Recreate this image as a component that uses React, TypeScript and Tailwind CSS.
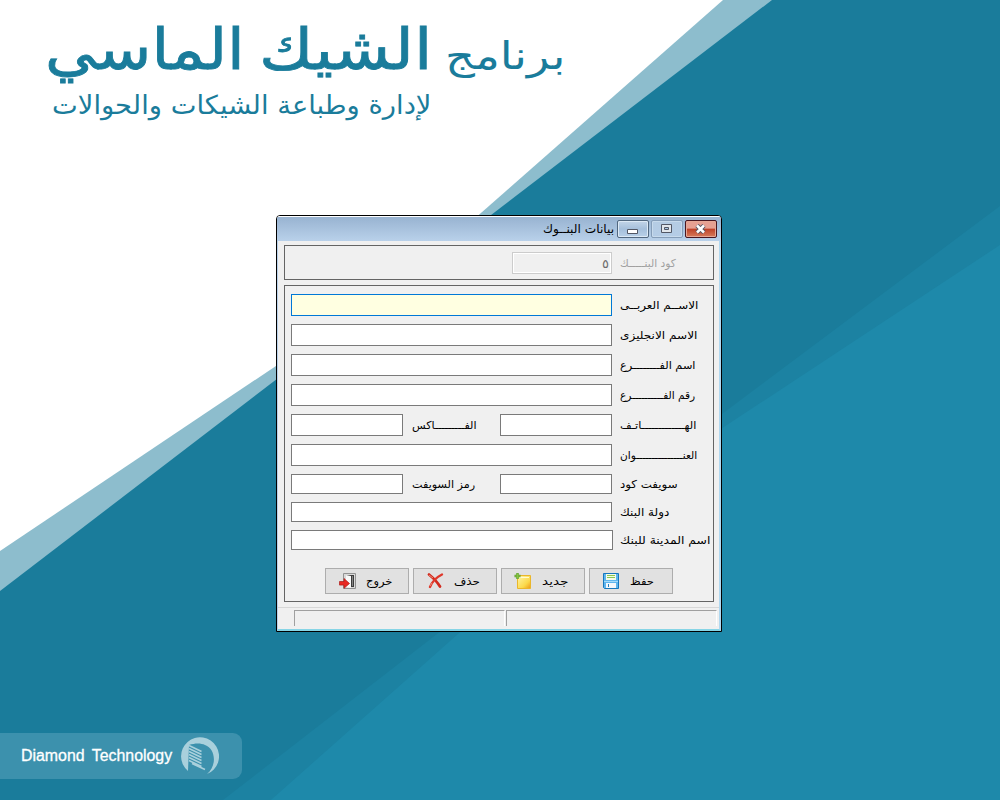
import { useLayoutEffect, useRef, useState } from "react";
import type { ReactNode } from "react";

interface FitTextProps {
    children: string;
    width: number;
    className?: string;
    dir?: "rtl" | "ltr";
}

// One line of text squeezed or stretched to a given width
function FitText({ children, width, className = "", dir = "rtl" }: FitTextProps) {
    const ref = useRef<HTMLSpanElement>(null);
    const [scale, setScale] = useState(1);

    useLayoutEffect(() => {
        if (ref.current) setScale(width / ref.current.offsetWidth);
    }, [width, children]);

    return (
        <span className={`block shrink-0 whitespace-nowrap ${className}`} style={{ width }} dir="ltr">
            <span ref={ref} dir={dir} className="inline-block origin-left" style={{ transform: `scaleX(${scale})` }}>
                {children}
            </span>
        </span>
    );
}

function Backdrop() {
    return (
        <svg className="absolute inset-0" width="1000" height="800" viewBox="0 0 1000 800">
            <rect width="1000" height="800" fill="#1a7c9b" />
            <path d="M1000 206L722 414L437 634L223 800H1000Z" fill="#1c82a2" />
            <path d="M1000 245L595 512L458 634L271 800H1000Z" fill="#1e89aa" />
            <path d="M0 0H772L0 591Z" fill="#8dbdcd" />
            <path d="M0 0H723L407 278L0 551Z" fill="#fff" />
        </svg>
    );
}

function SaveIcon() {
    return (
        <svg width="16" height="16" viewBox="0 0 16 16">
            <path d="M.5.5h15v15h-14l-1-1z" fill="#5eb5ee" stroke="#1577bd" />
            <rect x="3" y="1" width="10" height="6" fill="#f5fbe9" />
            <path d="M4 2.5h8M4 4.5h8" stroke="#8cc850" />
            <path d="M1 8.5h14" stroke="#a5dcfa" />
            <rect x="3" y="10" width="10" height="5" fill="#f4f8fc" />
            <path d="M5.5 11v3" stroke="#2581bd" />
        </svg>
    );
}

function NewIcon() {
    return (
        <svg width="18" height="17" viewBox="0 0 18 17">
            <defs>
                <linearGradient id="note" x1="0" y1="0" x2="1" y2="1">
                    <stop stopColor="#fff6a8" />
                    <stop offset=".65" stopColor="#fbd94b" />
                    <stop offset="1" stopColor="#ee9815" />
                </linearGradient>
            </defs>
            <path d="M3.5 2.5h13v13h-13z" fill="url(#note)" stroke="#eab62b" />
            <path d="M5 4.5h10" stroke="#fffbd1" />
            <path d="M3.5 0v6M.5 3h6" stroke="#5c9e2c" strokeWidth="2.4" />
            <path d="M3.5.5v5M1 3h5" stroke="#86c440" strokeWidth="1.2" />
        </svg>
    );
}

function DeleteIcon() {
    return (
        <svg width="17" height="16" viewBox="0 0 17 16">
            <path d="M2 1.5C5 4 10 8.500 13 13.500" fill="none" stroke="#d22a1d" strokeWidth="2.700" strokeLinecap="round" />
            <path d="M15 1.500C10 4 5 9 3 14" fill="none" stroke="#df382b" strokeWidth="2.300" strokeLinecap="round" />
            <path d="M2 2l4 3M3 13l2-3" stroke="#ef8a78" />
        </svg>
    );
}

function ExitIcon() {
    return (
        <svg width="17" height="16" viewBox="0 0 17 16">
            <path d="M4.500.5h12v15h-12z" fill="#d9d9d9" stroke="#929292" />
            <path d="M7 2h8v12H7z" fill="#3c3c3c" />
            <path d="M7 2l5 1v12l-5-1z" fill="#fafafa" />
            <path d="M13.500 3v10" stroke="#858585" />
            <path d="M.5 8.500H5V5.500l5.500 5L5 15.300v-3.200H.5z" fill="#e82923" stroke="#ae1b18" strokeWidth=".7" />
        </svg>
    );
}

function TitleBar() {
    return (
        <div className="flex h-[25px] justify-end border-t border-white bg-linear-to-b from-[#98b3d1] to-[#b9d1ea] pt-[3px] pr-1">
            <FitText width={71} className="mr-[3px] h-[19px] text-[12px] leading-[19px]">بيانات البنــوك</FitText>
            <div className="flex gap-[2px]">
                <button className="grid h-[18px] w-8 place-items-center rounded-[2px] border border-[#51677f] bg-linear-to-b from-[#c3d5e8] via-[#a5bfdb] to-[#b9d0e8] shadow-[inset_0_0_0_1px_#dce9f5]">
                    <svg width="12" height="11" viewBox="0 0 12 11">
                        <path d="M.5 5.500h10v4H.5z" fill="#fff" stroke="#525765" />
                    </svg>
                </button>
                <button className="grid h-[18px] w-8 place-items-center rounded-[2px] border border-[#859db8] bg-linear-to-b from-[#b5cce3] to-[#b4cce6] shadow-[inset_0_0_0_1px_#c7daec]">
                    <svg width="12" height="11" viewBox="0 0 12 11">
                        <path d="M.5 .5h10v8H.5z" fill="#e1e6eb" stroke="#525765" />
                        <path d="M3.500 3.500h4v2h-4z" fill="#a9c7e3" stroke="#525765" />
                    </svg>
                </button>
                <button className="grid h-[18px] w-8 place-items-center rounded-[2px] border border-[#481620] bg-linear-to-b from-[#e6a092] from-45% via-[#bd4027] via-50% to-[#d77b5b] shadow-[inset_0_0_0_1px_#e5a795]">
                    <svg width="12" height="11" viewBox="0 0 12 11">
                        <path d="M2 1.500l7 7M9 1.500l-7 7" stroke="#535665" strokeWidth="4.500" />
                        <path d="M2 1.500l7 7M9 1.500l-7 7" stroke="#fff" strokeWidth="2.500" />
                    </svg>
                </button>
            </div>
        </div>
    );
}

const INPUT = "block shrink-0 border border-[#7a7a7a] bg-white outline-none";

interface RowProps {
    label: string;
    labelWidth: number;
    className: string;
    children: ReactNode;
}

function Row({ label, labelWidth, className, children }: RowProps) {
    return (
        <div className={`flex items-center ${className}`}>
            {children}
            <FitText width={labelWidth} className="ml-2 pt-px leading-[18px]">{label}</FitText>
        </div>
    );
}

const WIDE_ROWS = [
    { label: "الاســم العربــى", width: 78, active: true },
    { label: "الاسم الانجليزى", width: 78, active: false },
    { label: "اسم الفــــــــرع", width: 75, active: false },
    { label: "رقم الفــــــــــرع", width: 75, active: false },
];

const ACTIONS = [
    { label: "خروج", width: 26, icon: <ExitIcon /> },
    { label: "حذف", width: 26, icon: <DeleteIcon /> },
    { label: "جديد", width: 26, icon: <NewIcon /> },
    { label: "حفظ", width: 24, icon: <SaveIcon /> },
];

function BankWindow() {
    return (
        <section className="absolute top-[215px] left-[276px] flex h-[417px] w-[446px] flex-col overflow-hidden rounded-t-[4px] border border-black bg-[#f0f0f0] font-['DejaVu_Sans',sans-serif] text-[11px] text-black">
            <TitleBar />
            <div className="flex grow flex-col border-r-2 border-b-2 border-l border-r-[#b0d8f0] border-b-[#87d5e6] border-l-[#b9d1ea]">
                <div className="mt-1 ml-[6px] flex h-[35px] w-[430px] shrink-0 border border-[#646464] pt-[6px] pl-[227px]">
                    <input readOnly value="٥" className="block h-[22px] w-[100px] border border-[#ccc] bg-[#f0f0f0] px-[2px] text-right text-[13px] text-[#6d6d6d] shadow-[inset_0_0_0_1px_#fff] outline-none" />
                    <FitText width={56} className="ml-2 pt-px leading-[22px] text-[#a0a0a0]">كود البنـــــك</FitText>
                </div>

                <div className="mt-[5px] ml-[6px] h-[317px] w-[430px] shrink-0 border border-[#646464] pt-2 pl-[6px]">
                    {WIDE_ROWS.map(row => (
                        <Row key={row.label} label={row.label} labelWidth={row.width} className="mb-2 h-[22px]">
                            <input className={`block h-[22px] w-[321px] shrink-0 border outline-none ${row.active ? "border-[#0078d7] bg-[#ffffe1]" : "border-[#7a7a7a] bg-white"}`} />
                        </Row>
                    ))}
                    <Row label="الهـــــــــــــاتـف" labelWidth={76} className="mb-2 h-[22px]">
                        <input className={`${INPUT} h-[22px] w-[112px]`} />
                        <FitText width={65} className="mr-[23px] ml-[9px] pt-px leading-[18px]">الفـــــــــاكس</FitText>
                        <input className={`${INPUT} h-[22px] w-[112px]`} />
                    </Row>
                    <Row label="العنـــــــــــــــوان" labelWidth={77} className="mb-2 h-[22px]">
                        <input className={`${INPUT} h-[22px] w-[321px]`} />
                    </Row>
                    <Row label="سويفت كود" labelWidth={58} className="mb-2 h-5">
                        <input className={`${INPUT} h-5 w-[112px]`} />
                        <FitText width={63} className="mr-[25px] ml-[9px] pt-px leading-[18px]">رمز السويفت</FitText>
                        <input className={`${INPUT} h-5 w-[112px]`} />
                    </Row>
                    <Row label="دولة البنك" labelWidth={49} className="mb-2 h-5">
                        <input className={`${INPUT} h-5 w-[321px]`} />
                    </Row>
                    <Row label="اسم المدينة للبنك" labelWidth={90} className="h-5">
                        <input className={`${INPUT} -mr-px h-5 w-[322px]`} />
                    </Row>

                    <div className="mt-[18px] ml-[34px] flex gap-1">
                        {ACTIONS.map(action => (
                            <button key={action.label} className="flex h-[26px] w-[84px] items-center border border-[#adadad] bg-[#e1e1e1]">
                                <span className="ml-3 flex w-[18px] justify-center">{action.icon}</span>
                                <FitText width={action.width} className="ml-[10px] pt-px text-left leading-[18px]">{action.label}</FitText>
                            </button>
                        ))}
                    </div>
                </div>

                {/* Status bar */}
                <div className="mt-[5px] flex grow gap-px border-t border-[#d7d7d7] pt-[2px] pl-4">
                    <div className="h-4 w-[211px] border-t border-r border-l border-[#a0a0a0] border-r-white" />
                    <div className="h-4 w-[211px] border-t border-r border-l border-[#a0a0a0] border-r-white" />
                </div>
            </div>
        </section>
    );
}

function Brand() {
    return (
        <footer className="absolute top-[733px] left-0 flex h-[46px] w-[242px] items-center rounded-r-[9px] bg-[#3c91ad] pl-[21px] text-white">
            <FitText dir="ltr" width={151} className="font-['Liberation_Sans',sans-serif] text-[16px] leading-6 [word-spacing:3px] [-webkit-text-stroke:0.3px_white]">Diamond Technology</FitText>
            <svg className="ml-[9px]" width="38" height="38" viewBox="0 0 38 38">
                <path d="M7 34A19 19 0 1 1 26 37C36 29 35 12 24 8C20 6 14 6 8 8Z" fill="#a9d0dc" />
                <path d="M8 8.500l12.500 6M8 11.500l12.500 6M8 14.500l12.500 6M8 17.500l12.500 6M8 20.500l12.500 6M8 23.500l12.500 6M11 26.500l13 6" stroke="#a9d0dc" strokeWidth="1.600" />
            </svg>
        </footer>
    );
}

export default function App() {
    return (
        <main className="relative h-[800px] w-[1000px] overflow-hidden bg-[#1a7c9b]">
            <Backdrop />
            <header className="relative pt-[11px] pl-[45px] font-['DejaVu_Sans',sans-serif] text-[#1a7c9b]">
                <h1 className="flex h-[76px] items-baseline">
                    <FitText width={200} className="text-[57px] leading-[76px] [-webkit-text-stroke:0.8px_#1a7c9b]">الماسي</FitText>
                    <FitText width={173} className="ml-[14px] text-[57px] leading-[76px] [-webkit-text-stroke:0.8px_#1a7c9b]">الشيك</FitText>
                    <FitText width={121} className="ml-[13px] text-[38px] leading-[50px]">برنامج</FitText>
                </h1>
                <FitText width={379} className="ml-[7px] pt-px text-[26px] leading-[34px]">لإدارة وطباعة الشيكات والحوالات</FitText>
            </header>
            <BankWindow />
            <Brand />
        </main>
    );
}
